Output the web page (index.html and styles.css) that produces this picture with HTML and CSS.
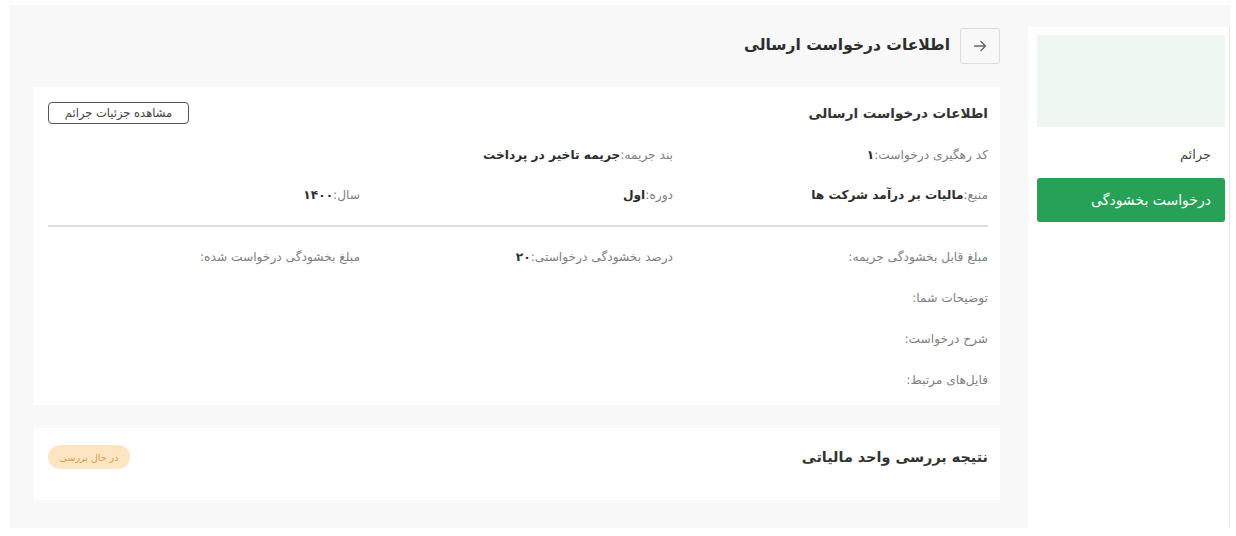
FILE: index.html
```html
<!DOCTYPE html>
<html lang="fa" dir="rtl">
<head>
<meta charset="utf-8">
<title>اطلاعات درخواست ارسالی</title>
<link rel="stylesheet" href="styles.css">
</head>
<body>
<div class="frame">
  <aside class="aside">
    <div class="aside-banner"></div>
    <div class="aside-link">جرائم</div>
    <div class="aside-btn">درخواست بخشودگی</div>
  </aside>
  <main class="main">
    <div class="head">
      <div class="back">
        <svg width="16" height="16" viewBox="0 0 16 16" fill="none" stroke="#666" stroke-width="1.4" stroke-linecap="round" stroke-linejoin="round"><path d="M2.5 8h11M9 3.5 13.5 8 9 12.5"/></svg>
      </div>
      <h1 class="head-title">اطلاعات درخواست ارسالی</h1>
    </div>

    <section class="card info">
      <div class="card-top">
        <h2 class="card-title">اطلاعات درخواست ارسالی</h2>
        <button class="outline-btn">مشاهده جزئیات جرائم</button>
      </div>
      <div class="grid top-grid">
        <div class="cell"><span class="lbl">کد رهگیری درخواست:</span><b class="val">۱</b></div>
        <div class="cell"><span class="lbl">بند جریمه:</span><b class="val">جریمه تاخیر در پرداخت</b></div>
        <div class="cell"></div>
        <div class="cell"><span class="lbl">منبع:</span><b class="val">مالیات بر درآمد شرکت ها</b></div>
        <div class="cell"><span class="lbl">دوره:</span><b class="val">اول</b></div>
        <div class="cell"><span class="lbl">سال:</span><b class="val">۱۴۰۰</b></div>
      </div>
      <hr class="divider">
      <div class="grid">
        <div class="cell tall"><span class="lbl">مبلغ قابل بخشودگی جریمه:</span></div>
        <div class="cell tall"><span class="lbl">درصد بخشودگی درخواستی:</span><b class="val">۲۰</b></div>
        <div class="cell tall"><span class="lbl">مبلغ بخشودگی درخواست شده:</span></div>
      </div>
      <div class="cell tall"><span class="lbl">توضیحات شما:</span></div>
      <div class="cell tall"><span class="lbl">شرح درخواست:</span></div>
      <div class="cell tall"><span class="lbl">فایل‌های مرتبط:</span></div>
    </section>

    <section class="card result">
      <div class="result-row">
        <h2 class="card-title big">نتیجه بررسی واحد مالیاتی</h2>
        <span class="badge">در حال بررسی</span>
      </div>
    </section>
  </main>
</div>
</body>
</html>
```

FILE: styles.css
```css
* { box-sizing: border-box; }
html, body { margin: 0; padding: 0; background: #fff; }
body {
  font-family: "DejaVu Sans", "Noto Sans", sans-serif;
  color: #333;
  overflow: hidden;
}
.frame {
  margin: 5px 6px 0 10px;
  height: 523px;
  background: #f8f8f8;
  display: flex;
  flex-direction: row;
  align-items: flex-start;
}
.aside {
  width: 202px;
  flex: none;
  margin-top: 22px;
  height: 520px;
  background: #fff;
  border-right: 1px solid #e6e6e6;
  padding: 8px 4px 0 9px;
}
.aside-banner {
  height: 92px;
  background: #edf6f1;
}
.aside-link {
  font-size: 13px;
  color: #444;
  padding: 20px 14px 0 0;
  height: 51px;
}
.aside-btn {
  height: 44px;
  background: #27a155;
  color: #fff;
  border-radius: 3px;
  font-size: 14px;
  display: flex;
  align-items: center;
  padding-right: 14px;
}
.main {
  flex: 1;
  padding: 23px 28px 0 23px;
}
.head {
  display: flex;
  align-items: center;
  gap: 10px;
  height: 36px;
}
.back {
  width: 40px;
  height: 36px;
  border: 1px solid #dcdcdc;
  border-radius: 3px;
  background: #f8f8f8;
  display: flex;
  align-items: center;
  justify-content: center;
}
.head-title {
  margin: 0 0 2px;
  font-size: 15.5px;
  font-weight: bold;
  color: #2d2d2d;
}
.card {
  background: #fff;
  margin-top: 23px;
  padding: 0 12px 0 15px;
}
.info { height: 318px; padding-top: 14px; }
.card-top {
  display: flex;
  align-items: center;
  justify-content: space-between;
  height: 24px;
}
.card-title {
  margin: 0;
  font-size: 13.5px;
  font-weight: bold;
  color: #333;
}
.card-title.big { font-size: 14.4px; }
.outline-btn {
  font-family: inherit;
  font-size: 11.5px;
  color: #444;
  background: #fff;
  border: 1px solid #555;
  border-radius: 4px;
  height: 22px;
  padding: 0 6px;
  width: 141px;
}
.grid {
  display: grid;
  grid-template-columns: 315px 313px 1fr;
}
.top-grid { margin-top: 10px; }
.cell {
  height: 40px;
  display: flex;
  align-items: center;
  font-size: 12.2px;
}
.cell.tall { height: 41px; }
.lbl { color: #808080; }
.val { color: #2d2d2d; font-weight: bold; }
.divider {
  border: 0;
  border-top: 2px solid #dedede;
  margin: 10px 0 9px;
}
.result {
  height: 72px;
  padding-top: 16px;
}
.result-row {
  height: 26px;
  display: flex;
  align-items: center;
  justify-content: space-between;
}
.badge {
  background: #fde5c3;
  color: #d19a45;
  font-size: 9.5px;
  border-radius: 12px;
  height: 24px;
  width: 82px;
  display: flex;
  align-items: center;
  justify-content: center;
}
```
